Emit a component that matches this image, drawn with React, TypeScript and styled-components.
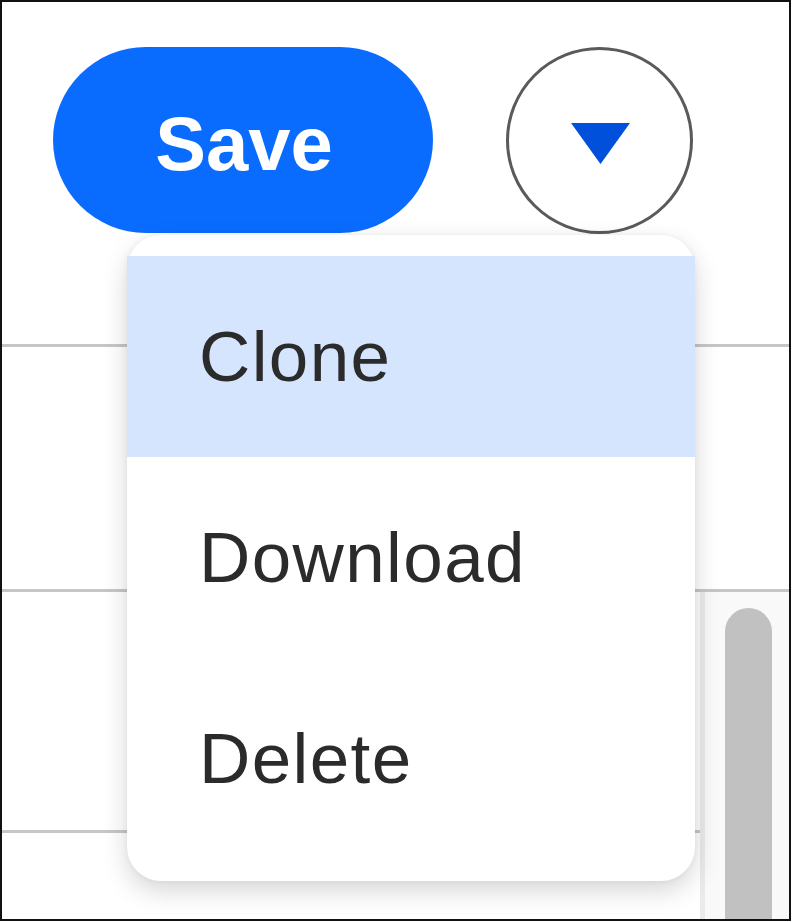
import { styled, createGlobalStyle } from 'styled-components';

const GlobalStyle = createGlobalStyle`
  html, body {
    margin: 0;
    padding: 0;
    background: #ffffff;
  }
  * {
    box-sizing: border-box;
  }
`;

const menuItems = ['Clone', 'Download', 'Delete'];

const App = () => {
  return (
    <>
      <GlobalStyle />
      <Frame>
        <Toolbar>
          <SaveButton>Save</SaveButton>
          <ToggleButton aria-label="More actions">
            <svg width="59" height="41" viewBox="0 0 59 41">
              <polygon points="0,0 59,0 29.5,41" fill="#0050db" />
            </svg>
          </ToggleButton>
        </Toolbar>
        <Row $height={111} />
        <Row $height={242} />
        <Body>
          <List>
            <Row $height={238} />
          </List>
          <ScrollTrack>
            <ScrollThumb />
          </ScrollTrack>
        </Body>
        <Menu>
          {menuItems.map((item, i) => (
            <MenuItem key={item} $active={i === 0}>
              {item}
            </MenuItem>
          ))}
        </Menu>
      </Frame>
    </>
  );
};

const Frame = styled.div`
  position: relative;
  width: 791px;
  height: 921px;
  border: 2px solid #111111;
  overflow: hidden;
  display: flex;
  flex-direction: column;
  font-family: 'Liberation Sans', Arial, sans-serif;
`;

const Toolbar = styled.div`
  display: flex;
  align-items: flex-start;
  gap: 73px;
  padding: 45px 0 0 51px;
  height: 231px;
  flex-shrink: 0;
`;

const SaveButton = styled.button`
  width: 380px;
  height: 186px;
  border: none;
  border-radius: 93px;
  background: #0a6cff;
  color: #ffffff;
  font-family: 'Liberation Sans', Arial, sans-serif;
  font-weight: 700;
  font-size: 76px;
  padding: 7px 0 0 2px;
  display: flex;
  align-items: center;
  justify-content: center;
  cursor: pointer;
`;

const ToggleButton = styled.button`
  width: 187px;
  height: 187px;
  border: 3px solid #5a5a5a;
  border-radius: 50%;
  background: #ffffff;
  padding: 6px 0 0 1px;
  display: flex;
  align-items: center;
  justify-content: center;
  cursor: pointer;
`;

const Row = styled.div<{ $height: number }>`
  height: ${({ $height }) => $height + 3}px;
  flex-shrink: 0;
  border-bottom: 3px solid #c6c6c6;
`;

const Body = styled.div`
  flex: 1;
  display: flex;
  min-height: 0;
`;

const List = styled.div`
  flex: 1;
`;

const ScrollTrack = styled.div`
  width: 89px;
  background: #f9f9f9;
  border-left: 5px solid #ebebeb;
  padding: 16px 0 0 20px;
`;

const ScrollThumb = styled.div`
  width: 47px;
  height: 400px;
  border-radius: 24px;
  background: #c1c1c1;
`;

const Menu = styled.ul`
  position: absolute;
  top: 233px;
  left: 125px;
  width: 568px;
  margin: 0;
  padding: 21px 0 22px;
  list-style: none;
  background: #ffffff;
  border-radius: 34px;
  box-shadow: 0 10px 26px rgba(0, 0, 0, 0.16), 0 0 6px rgba(0, 0, 0, 0.05);
`;

const MenuItem = styled.li<{ $active?: boolean }>`
  height: 201px;
  display: flex;
  align-items: center;
  padding-left: 72px;
  font-size: 71px;
  letter-spacing: 1.4px;
  color: #2b2b2b;
  background: ${({ $active }) => ($active ? '#d5e5fd' : 'transparent')};
  cursor: pointer;
`;

export default App;
